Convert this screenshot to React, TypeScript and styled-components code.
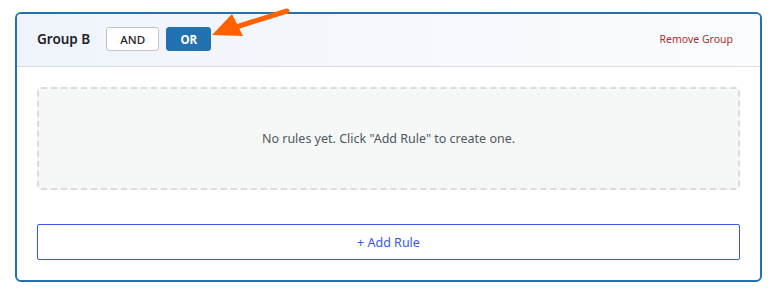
import React from "react";
import styled, { createGlobalStyle } from "styled-components";

const GlobalStyle = createGlobalStyle`
  body {
    margin: 0;
    background: #ffffff;
    font-family: "Noto Sans", "Open Sans", sans-serif;
  }
`;

const Page = styled.div`
  position: relative;
  padding: 12px 17px 18px 15px;
`;

const GroupCard = styled.div`
  border: 2px solid #2271b1;
  border-radius: 6px;
  background: #ffffff;
  overflow: hidden;
`;

const GroupHeader = styled.div`
  display: flex;
  align-items: center;
  padding: 13px 20px 15px 20px;
  background: linear-gradient(90deg, #eff4fb 0%, #fbfcfe 100%);
  border-bottom: 1px solid #dcdcde;
`;

const GroupTitle = styled.span`
  font-size: 13.5px;
  font-weight: 600;
  color: #1d2327;
  margin-right: 16px;
`;

const Operators = styled.div`
  display: flex;
  gap: 7px;
`;

const OperatorButton = styled.button<{ $active?: boolean }>`
  height: 24px;
  min-width: ${(p) => (p.$active ? "45px" : "53px")};
  padding: 0 12px;
  border-radius: 3px;
  font-family: inherit;
  font-size: 11.5px;
  font-weight: ${(p) => (p.$active ? 700 : 500)};
  border: 1px solid ${(p) => (p.$active ? "#2271b1" : "#c3c4c7")};
  background: ${(p) => (p.$active ? "#2271b1" : "#ffffff")};
  color: ${(p) => (p.$active ? "#ffffff" : "#1d2327")};
`;

const RemoveButton = styled.button`
  margin-left: auto;
  margin-right: 7px;
  padding: 0;
  border: none;
  background: none;
  font-family: inherit;
  font-size: 10.5px;
  color: #b32d2e;
`;

const GroupBody = styled.div`
  display: flex;
  flex-direction: column;
  gap: 34px;
  padding: 20px;
`;

const EmptyRules = styled.div`
  height: 99px;
  display: flex;
  align-items: center;
  justify-content: center;
  border: 2px dashed #dcdcde;
  border-radius: 4px;
  background: #f6f7f7;
  font-size: 12.5px;
  color: #50575e;
`;

const AddRuleButton = styled.button`
  height: 36px;
  width: 100%;
  border: 1px solid #3858e9;
  border-radius: 2px;
  background: #ffffff;
  font-family: inherit;
  font-size: 12.5px;
  color: #3858e9;
`;

const Annotation = styled.svg`
  position: absolute;
  left: 0;
  top: 0;
  pointer-events: none;
`;

export default function App() {
  return (
    <>
      <GlobalStyle />
      <Page>
        <GroupCard>
          <GroupHeader>
            <GroupTitle>Group B</GroupTitle>
            <Operators>
              <OperatorButton>AND</OperatorButton>
              <OperatorButton $active>OR</OperatorButton>
            </Operators>
            <RemoveButton>Remove Group</RemoveButton>
          </GroupHeader>
          <GroupBody>
            <EmptyRules>No rules yet. Click "Add Rule" to create one.</EmptyRules>
            <AddRuleButton>+ Add Rule</AddRuleButton>
          </GroupBody>
        </GroupCard>
        <Annotation width="300" height="60" viewBox="0 0 300 60">
          <line x1="287" y1="11" x2="236" y2="27" stroke="#ff6000" strokeWidth="5" strokeLinecap="round" />
          <polygon points="212,35 232,14 243,36" fill="#ff6000" />
        </Annotation>
      </Page>
    </>
  );
}
